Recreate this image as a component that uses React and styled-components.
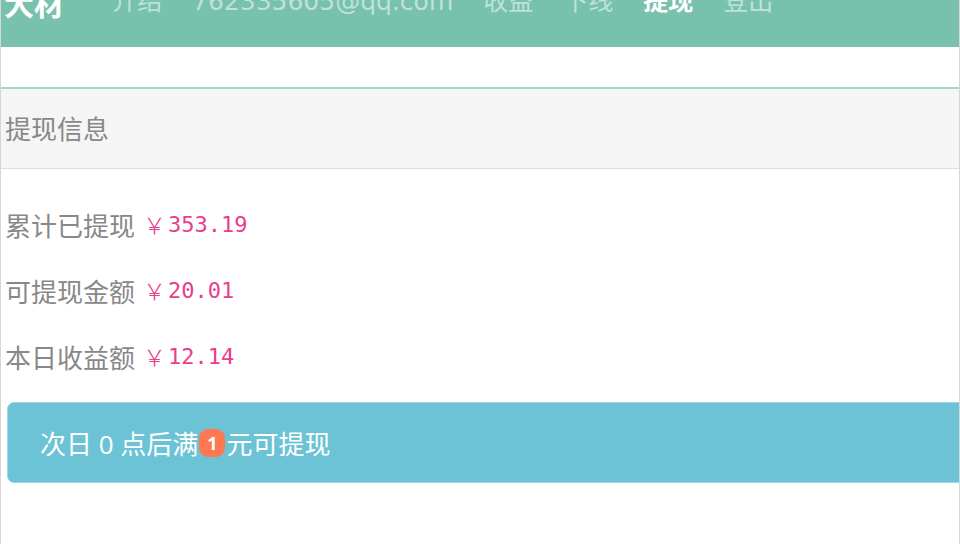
import React from 'react';
import styled, { createGlobalStyle } from 'styled-components';

const GlobalStyle = createGlobalStyle`
  html, body {
    margin: 0;
    padding: 0;
    background: #fff;
    overflow: hidden;
  }
  body {
    font-family: "Open Sans", "Noto Sans CJK SC", sans-serif;
  }
`;

const NAV_ITEMS = [
  { label: '介绍' },
  { label: '762335605@qq.com' },
  { label: '收益' },
  { label: '下线' },
  { label: '提现', active: true },
  { label: '登出' },
];

const STATS = [
  { label: '累计已提现', value: '353.19' },
  { label: '可提现金额', value: '20.01' },
  { label: '本日收益额', value: '12.14' },
];

const App = () => {
  return (
    <Frame>
      <GlobalStyle />
      <Navbar>
        <Brand>大材</Brand>
        <NavList>
          {NAV_ITEMS.map((item, idx) => (
            <NavLink key={`nav-${idx}`} $active={item.active}>
              {item.label}
            </NavLink>
          ))}
        </NavList>
      </Navbar>

      <Panel>
        <PanelHeading>提现信息</PanelHeading>
        <PanelBody>
          {STATS.map((row, idx) => (
            <StatRow key={`stat-${idx}`}>
              {row.label}
              <Amount>
                <Yen>￥</Yen>
                {row.value}
              </Amount>
            </StatRow>
          ))}
          <Alert>
            次日 0 点后满<Badge>1</Badge>元可提现
          </Alert>
        </PanelBody>
      </Panel>
    </Frame>
  );
};

export default App;

const Frame = styled.div`
  width: 960px;
  height: 544px;
  box-sizing: border-box;
  border-left: 1px solid #d6d6d6;
  border-right: 1px solid #d6d6d6;
  overflow: hidden;
`;

const Navbar = styled.div`
  display: flex;
  align-items: flex-start;
  height: 47px;
  margin-left: -1px;
  margin-right: -1px;
  background: #78c2ad;
  overflow: hidden;
`;

const Brand = styled.div`
  margin-top: -13px;
  padding-left: 4px;
  font-family: "Noto Sans CJK SC", sans-serif;
  font-size: 30px;
  font-weight: 700;
  line-height: 30px;
  color: #fff;
`;

const NavList = styled.div`
  display: flex;
  margin-left: 33px;
  margin-top: -12px;
`;

const NavLink = styled.div`
  padding: 0 15px;
  font-family: "DejaVu Sans", "Noto Sans CJK SC", sans-serif;
  font-size: 25px;
  line-height: 28px;
  font-weight: ${p => (p.$active ? 700 : 400)};
  color: ${p => (p.$active ? '#ffffff' : 'rgba(255, 255, 255, 0.55)')};
  white-space: nowrap;
`;

const Panel = styled.div`
  margin-top: 40px;
  border-top: 2px solid #a4d8c6;
`;

const PanelHeading = styled.div`
  display: flex;
  align-items: center;
  box-sizing: border-box;
  height: 80px;
  padding: 0 0 3px 4px;
  background: #f5f5f5;
  border-bottom: 1px solid #dddddd;
  font-family: "Noto Sans CJK SC", sans-serif;
  font-size: 26px;
  color: #888;
`;

const PanelBody = styled.div`
  padding: 22px 0 0 4px;
`;

const StatRow = styled.div`
  display: flex;
  align-items: center;
  gap: 8px;
  height: 66px;
  font-family: "Noto Sans CJK SC", sans-serif;
  font-size: 26px;
  color: #888;
`;

const Amount = styled.code`
  display: flex;
  align-items: center;
  font-family: "DejaVu Sans Mono", monospace;
  font-size: 22px;
  color: #e83e8c;
`;

const Yen = styled.span`
  margin-right: 2px;
  font-family: "Noto Sans CJK SC", sans-serif;
  font-size: 23px;
  font-weight: 300;
`;

const Alert = styled.div`
  display: flex;
  align-items: center;
  box-sizing: border-box;
  width: 1000px;
  height: 81px;
  margin: 13px 0 0 2px;
  padding-left: 32px;
  background: #6cc3d5;
  border: 1px solid #9ed6e2;
  border-radius: 7px;
  font-family: "Open Sans", "Noto Sans CJK SC", sans-serif;
  font-size: 26px;
  color: #fff;
`;

const Badge = styled.span`
  display: inline-flex;
  align-items: center;
  justify-content: center;
  width: 26px;
  height: 28px;
  margin: 0 1px;
  border-radius: 9px;
  background: #ff7851;
  font-size: 18px;
  font-weight: 700;
  color: #fff;
`;
